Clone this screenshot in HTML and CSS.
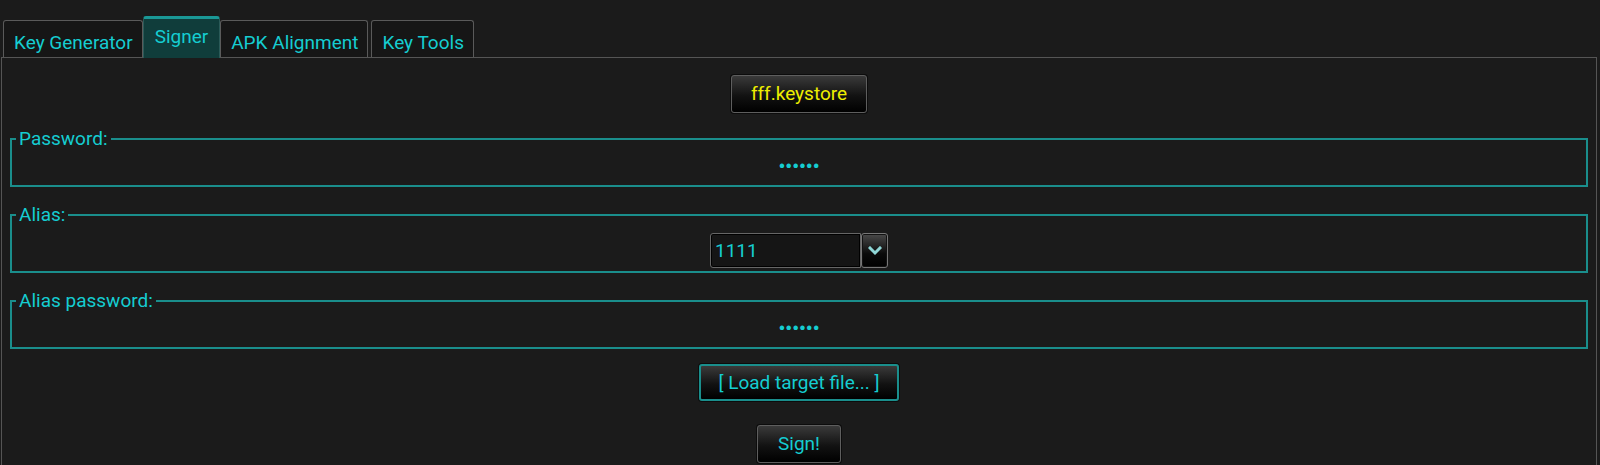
FILE: index.html
```html
<!DOCTYPE html>
<html lang="en">
<head>
<meta charset="utf-8">
<title>Signer</title>
<link rel="stylesheet" href="styles.css">
</head>
<body>
<div class="tabbar">
  <div class="tab">Key Generator</div>
  <div class="tab tab-active">Signer</div>
  <div class="tab">APK Alignment</div>
  <div class="tab tab-gap">Key Tools</div>
</div>
<div class="pane">
  <button class="btn btn-keystore">fff.keystore</button>
  <fieldset class="group group-first">
    <legend>Password:</legend>
    <div class="secret">••••••</div>
  </fieldset>
  <fieldset class="group group-combo">
    <legend>Alias:</legend>
    <div class="combo">
      <div class="combo-field">1111</div>
      <div class="combo-btn">
        <svg width="14" height="10" viewBox="0 0 14 10"><path d="M2 2 L7 7 L12 2" fill="none" stroke="#8fd6d6" stroke-width="3" stroke-linecap="square"/></svg>
      </div>
    </div>
  </fieldset>
  <fieldset class="group">
    <legend>Alias password:</legend>
    <div class="secret">••••••</div>
  </fieldset>
  <button class="btn btn-load">[ Load target file... ]</button>
  <button class="btn btn-sign">Sign!</button>
</div>
</body>
</html>
```
FILE: styles.css
```css
html, body {
  margin: 0;
  padding: 0;
  background: #1b1b1b;
  font-family: Roboto, "Noto Sans", sans-serif;
  font-size: 19px;
  color: #15cdd1;
  overflow: hidden;
}
.tabbar {
  display: flex;
  align-items: flex-end;
  padding: 16px 0 0 3px;
}
.tab {
  box-sizing: border-box;
  height: 37px;
  padding: 11px 9px 4px 10px;
  line-height: 22px;
  border: 1px solid #5a5a5a;
  border-bottom: none;
  border-radius: 3px 3px 0 0;
  background: #161616;
  white-space: nowrap;
}
.tab-active {
  height: 42px;
  margin-bottom: -1px;
  padding: 7px 11px 11px;
  background: #103d3b;
  border: 1px solid #2a5a58;
  border-top: 3px solid #1a9896;
  border-bottom: none;
  position: relative;
  z-index: 1;
}
.tab-gap {
  margin-left: 3px;
}
.pane {
  margin: 0 3px 0 1px;
  border: 1px solid #555;
  border-bottom: none;
  display: flex;
  flex-direction: column;
  align-items: center;
  padding-top: 17px;
  height: 408px;
  box-sizing: border-box;
}
.btn {
  font-family: Roboto, "Noto Sans", sans-serif;
  font-size: 19px;
  line-height: 22px;
  border: 1px solid #5e5e5e;
  border-radius: 3px;
  background: linear-gradient(#3a3a3a, #121212 55%, #000);
  box-shadow: 0 0 0 1px #0c0c0c;
  color: #15cdd1;
  padding: 7px 20px;
  cursor: pointer;
  flex: none;
}
.btn-keystore {
  color: #eeee00;
  height: 38px;
  padding: 7px 19px;
}
.group {
  align-self: stretch;
  margin: 16px 8px 0;
  padding: 7px 4px 7px;
  border: 2px solid #1a8e8c;
  min-width: 0;
}
.group legend {
  padding: 0 3px;
  line-height: 20px;
}
.group-combo {
  padding: 8px 4px 3px;
  margin-top: 18px;
}
.group + .group {
  margin-top: 18px;
}
.secret {
  text-align: center;
  line-height: 22px;
  height: 22px;
  font-weight: 700;
}
.combo {
  display: flex;
  justify-content: center;
}
.combo-field {
  box-sizing: border-box;
  width: 151px;
  height: 35px;
  padding: 0 4px;
  line-height: 33px;
  border: 1px solid #666;
  border-radius: 3px 0 0 3px;
  background: #151515;
  box-shadow: inset 0 0 0 1px #000;
}
.combo-btn {
  box-sizing: border-box;
  width: 27px;
  height: 35px;
  border: 1px solid #777;
  border-radius: 3px;
  background: linear-gradient(#4a4a4a, #0a0a0a 60%, #000);
  box-shadow: inset 0 0 0 1px #111;
  display: flex;
  align-items: center;
  justify-content: center;
}
.btn-load {
  margin-top: 15px;
  height: 37px;
  padding: 6px 17px;
  border: 2px solid #1a8e8c;
}
.btn-sign {
  margin-top: 24px;
  height: 38px;
}
```
